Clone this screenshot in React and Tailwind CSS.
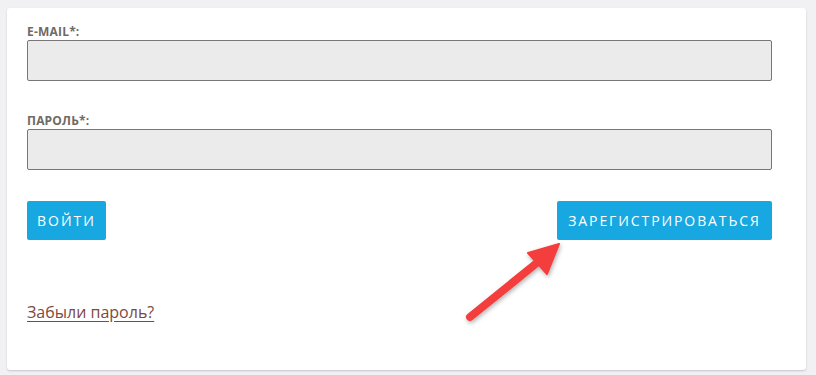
export default function App() {
  return (
    <div className="min-h-[375px] w-[816px] bg-[#f1f1f3] pt-[8px] pl-[7px]" style={{ fontFamily: '"Open Sans", "Noto Sans", sans-serif' }}>
      <div className="relative w-[799px] h-[362px] bg-white rounded-[3px] shadow-[0_1px_2px_rgba(0,0,0,0.18)] pt-[16px] pl-[20px] pr-[34px]">
        <label className="block text-[12px] leading-[16px] font-bold text-[#6e6a66] tracking-[0.2px]">E-MAIL*:</label>
        <div className="h-[41px] bg-[#ebebeb] border border-[#777] rounded-[2px]" />

        <label className="block mt-[32px] text-[12px] leading-[16px] font-bold text-[#6e6a66] tracking-[0.2px]">ПАРОЛЬ*:</label>
        <div className="h-[41px] bg-[#ebebeb] border border-[#777] rounded-[2px]" />

        <div className="mt-[31px] flex justify-between">
          <button className="h-[39px] w-[79px] bg-[#17a8e1] rounded-[2px] text-white text-[14px] font-medium tracking-[2px] flex items-center justify-center">
            ВОЙТИ
          </button>
          <button className="h-[39px] w-[215px] bg-[#17a8e1] rounded-[2px] text-white text-[14px] font-medium tracking-[1.9px] flex items-center justify-center">
            ЗАРЕГИСТРИРОВАТЬСЯ
          </button>
        </div>

        <a href="#" className="block mt-[61px] w-fit text-[16px] leading-[22px] text-[#7d4a3e] underline underline-offset-[3px]">
          Забыли пароль?
        </a>

        <svg className="absolute left-[448px] top-[220px] pointer-events-none" width="120" height="100" viewBox="455 228 120 100">
          <defs>
            <filter id="sh" x="-20%" y="-20%" width="140%" height="140%">
              <feDropShadow dx="1" dy="2" stdDeviation="2" floodColor="#000" floodOpacity="0.3" />
            </filter>
          </defs>
          <g filter="url(#sh)">
            <line x1="470" y1="317" x2="538" y2="262" stroke="#f43d3d" strokeWidth="8" strokeLinecap="round" />
            <polygon points="559,244 528,253 547,274" fill="#f43d3d" stroke="#f43d3d" strokeWidth="2" strokeLinejoin="round" />
          </g>
        </svg>
      </div>
    </div>
  );
}
